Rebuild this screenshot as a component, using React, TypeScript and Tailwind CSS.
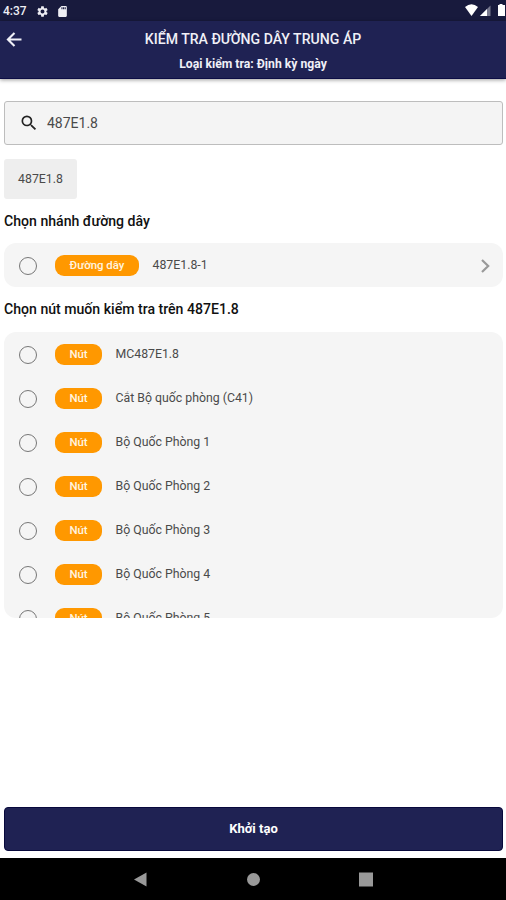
import { MdSdCard, MdSearch, MdSettings } from "react-icons/md";

const nodes = [
  "MC487E1.8",
  "Cắt Bộ quốc phòng (C41)",
  "Bộ Quốc Phòng 1",
  "Bộ Quốc Phòng 2",
  "Bộ Quốc Phòng 3",
  "Bộ Quốc Phòng 4",
  "Bộ Quốc Phòng 5",
];

function Row({ tag, label, wide, arrow }: { tag: string; label: string; wide?: boolean; arrow?: boolean }) {
  return (
    <div className="flex h-11 shrink-0 items-center pl-[15px] pr-1.5">
      <span className="mt-px size-[18px] shrink-0 rounded-full border border-[#777]" />
      <span
        className={`ml-[18px] flex h-[21px] shrink-0 items-center justify-center rounded-[9px] bg-[#ff9800] text-[11.4px] font-medium leading-[18px] text-[#fff5e0] ${wide ? "w-[84px]" : "w-[47px]"}`}
      >
        {tag}
      </span>
      <span className="ml-[13.5px] grow text-[12.3px] text-[#4a4a4a]">{label}</span>
      {arrow && (
        <svg className="mt-px size-6" viewBox="0 0 24 24" fill="none" stroke="#999" strokeWidth="2.2">
          <path d="M9 6L15.200 12L9 18" />
        </svg>
      )}
    </div>
  );
}

function StatusBar() {
  return (
    <div className="flex h-[21px] items-center bg-[#181a3d] pl-[3px] pt-px text-[#eeeef4]">
      <span className="w-[33px] text-[12px] font-medium">4:37</span>
      <MdSettings className="size-[13px]" />
      <MdSdCard className="ml-[7px] size-[13px]" />
      <svg className="-mt-px ml-auto" width="42" height="21" viewBox="0 0 42 21">
        <path d="M1 7Q7.500 1.500 14 7L7.500 16Z" fill="#fff" />
        <path d="M26.500 5.500V16H16Z" fill="#77788d" />
        <path d="M23 9V16H16Z" fill="#fff" />
        <path d="M34 5h1.500V4h3v1H41v11H34Z" fill="#fff" />
      </svg>
    </div>
  );
}

export default function App() {
  return (
    <div className="flex h-[900px] w-[506px] flex-col overflow-hidden bg-white font-['Roboto','Noto_Sans',sans-serif]">
      <StatusBar />
      <header className="flex h-[58px] shrink-0 border-b border-[#0c0d45] bg-[#1f2253] text-[#f0f0f7] shadow-[0_1px_4px_rgba(0,0,0,0.4)]">
        <div className="w-10 pl-1 pt-2">
          <svg className="size-[21px]" viewBox="0 0 24 24" fill="none" stroke="currentColor" strokeWidth="2.4">
            <path d="M20 12H5.500M12 4.500L4.500 12L12 19.500" />
          </svg>
        </div>
        <div className="flex grow flex-col items-center pr-10 text-center">
          <h1 className="mt-[9px] text-[14.1px] font-medium leading-[19px]">KIỂM TRA ĐƯỜNG DÂY TRUNG ÁP</h1>
          <p className="mt-[6px] text-[12.2px] font-bold leading-[18px]">Loại kiểm tra: Định kỳ ngày</p>
        </div>
      </header>
      <main className="flex grow flex-col pl-1 pr-[3px]">
        <div className="mt-[22px] flex h-11 items-center rounded-[3px] border border-[#bdbdbd] bg-[#f4f4f4] pl-3.5">
          <MdSearch className="size-5 text-[#222]" />
          <span className="ml-2 text-[14px] text-[#4a4a4a]">487E1.8</span>
        </div>
        <div className="mt-3.5 flex h-10 w-[73px] items-center justify-center rounded-[3px] bg-[#eee] text-[12.3px] text-[#4a4a4a]">
          487E1.8
        </div>
        <h2 className="mt-3 text-[14.1px] font-medium leading-5 text-[#111]">Chọn nhánh đường dây</h2>
        <section className="mt-3 rounded-xl bg-[#f5f5f5]">
          <Row tag="Đường dây" label="487E1.8-1" wide arrow />
        </section>
        <h2 className="mt-3 text-[14.1px] font-medium leading-5 text-[#111]">Chọn nút muốn kiểm tra trên 487E1.8</h2>
        <section className="mt-[13px] h-[286px] overflow-hidden rounded-xl bg-[#f5f5f5]">
          {nodes.map((node) => (
            <Row key={node} tag="Nút" label={node} />
          ))}
        </section>
        <button className="mb-[7px] mt-auto h-11 rounded-[4px] border border-[#08093c] bg-[#1f2253] text-[13px] font-bold text-white">
          Khởi tạo
        </button>
      </main>
      <nav className="flex h-[42px] shrink-0 bg-black">
        <svg width="506" height="42" viewBox="0 0 506 42" fill="#999">
          <path d="M134 21.500L146.500 14.500V28.500Z" />
          <circle cx="253.500" cy="21.500" r="6.500" />
          <path d="M359 14.500H373V28.500H359Z" />
        </svg>
      </nav>
    </div>
  );
}
